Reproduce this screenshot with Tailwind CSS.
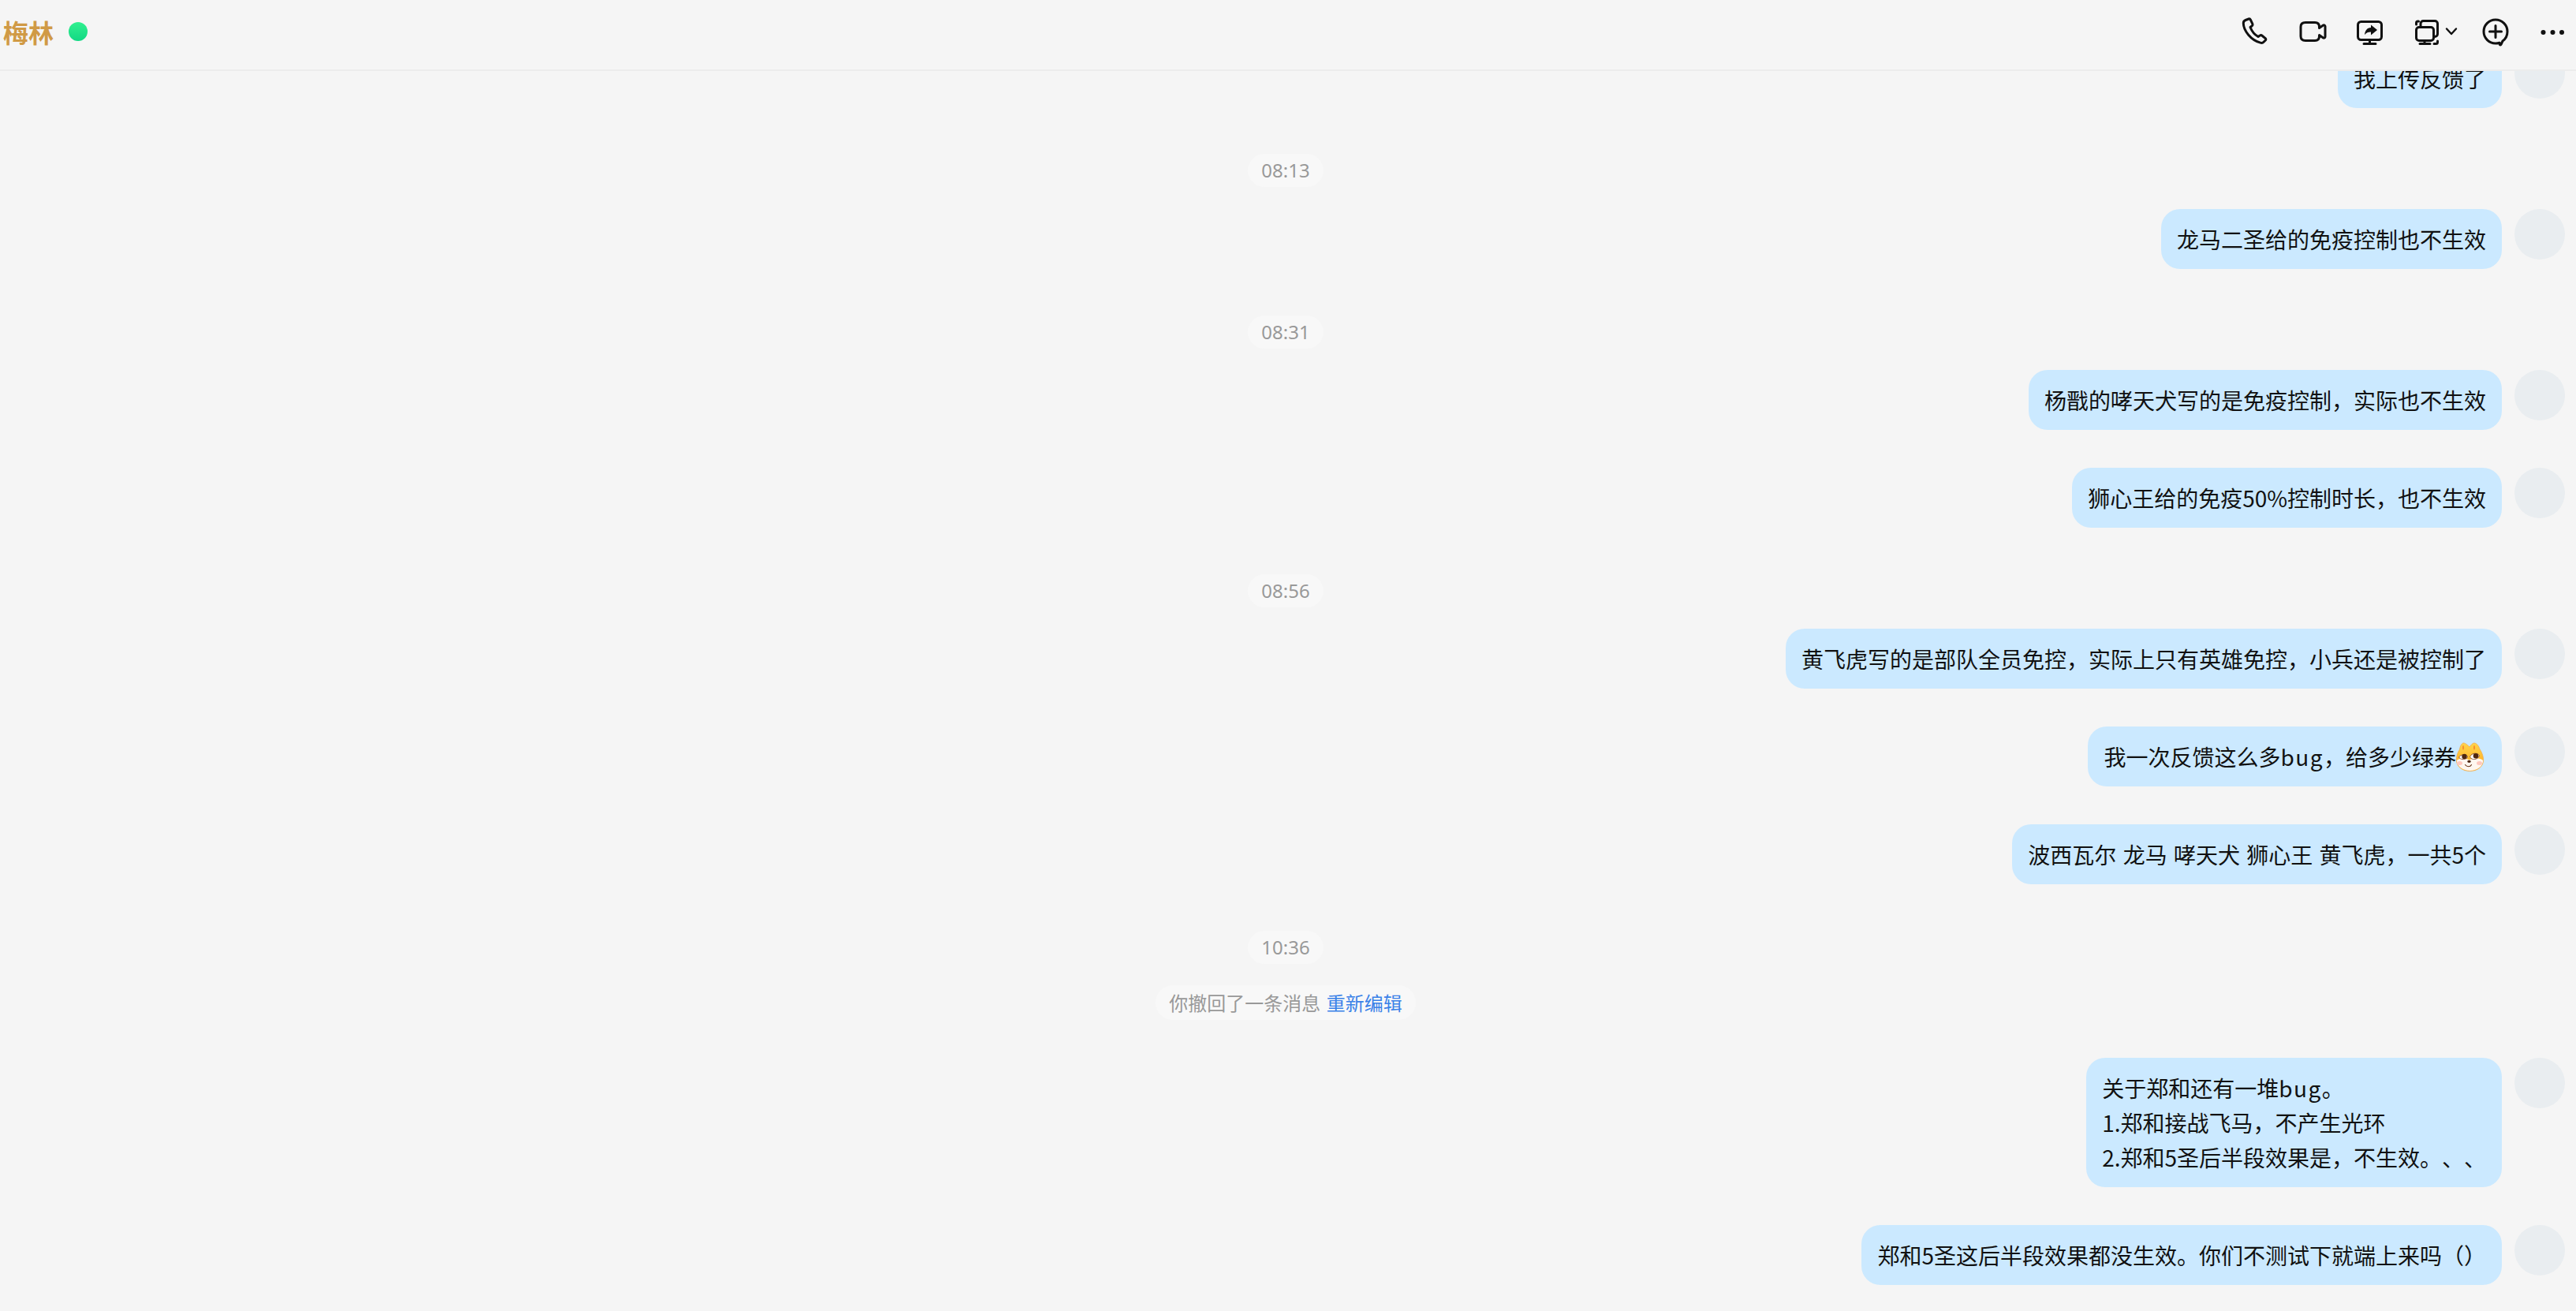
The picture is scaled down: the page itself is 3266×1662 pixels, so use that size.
<!doctype html>
<html lang="zh-CN">
<head>
<meta charset="utf-8">
<script src="https://cdn.jsdelivr.net/npm/@tailwindcss/browser@4"></script>
</head>
<body class="m-0">
<div class="w-[3266px] h-[1662px] overflow-hidden flex flex-col bg-[#f5f5f5] text-[#111] [text-spacing-trim:space-all] font-['Noto_Sans_CJK_SC','Noto_Sans',sans-serif]">
  <header class="h-[90px] shrink-0 relative z-10 bg-[#f5f5f5] border-b-2 border-[#ececec] flex items-center justify-between pl-[4px] pr-[10px] pb-[8px]">
    <div class="flex items-center gap-[19px]">
      <span class="text-[32px] font-bold leading-[44px] text-[#d09a45]">梅林</span>
      <span class="w-[24px] h-[24px] rounded-full bg-gradient-to-b from-[#2ff08f] to-[#10d884]"></span>
    </div>
    <div class="flex items-center gap-[32px] text-[#111]">
      <svg class="w-[40px] h-[40px]" viewBox="0 0 40 40" fill="none" stroke="currentColor" stroke-width="3" stroke-linejoin="round" stroke-linecap="round"><path d="M7 5.500l4-1.500c1-.3 1.800 0 2.300 1l2.600 5.400c.4.900.2 1.700-.6 2.300l-2.300 1.800c1.800 4.500 5.600 9.500 10 12l2.400-1.600c.8-.5 1.600-.5 2.300.1l4.500 3.700c.8.700.8 1.500.1 2.300l-2.300 2.300c-1.200 1.200-2.700 1.300-4.200.8C14 31 4.500 19 4.300 9.500 4.300 7.500 5.300 6.200 7 5.500z"/></svg>
      <svg class="w-[40px] h-[40px]" viewBox="0 0 40 40" fill="none" stroke="currentColor" stroke-width="3" stroke-linejoin="round" stroke-linecap="round"><path d="M11 8.500h12c3.500 0 5.500 2 5.500 5.500v1.500l5-3.500c1-.6 2.500 0 2.500 1.500v13c0 1.500-1.500 2.100-2.500 1.500l-5-3.500V26c0 3.500-2 5.500-5.500 5.500H11c-4 0-6-2-6-5.500V14c0-3.500 2-5.500 6-5.500z"/></svg>
      <svg class="w-[40px] h-[40px]" viewBox="0 0 40 40" fill="none" stroke="currentColor" stroke-width="3" stroke-linejoin="round" stroke-linecap="round"><rect x="5.500" y="7.500" width="30" height="23" rx="4"/><path d="M20.500 31v4.500M13 35.500h15"/><path fill="currentColor" stroke="none" d="M22 11.500l8 6.500-8 6.500v-4c-3.500 0-6 1-8 3.500.5-5 3-9 8-9z"/></svg>
      <div class="flex items-center gap-[4px]">
        <svg class="w-[40px] h-[40px]" viewBox="0 0 40 40" fill="none" stroke="currentColor" stroke-width="3" stroke-linejoin="round" stroke-linecap="round"><rect x="7.500" y="14.500" width="22" height="17" rx="3.500"/><path d="M13 14.500V10c0-2 1.500-3.500 3.500-3.500H31c2 0 3.500 1.500 3.500 3.500v13c0 2-1.500 3.500-3.500 3.500h-1.500"/><path d="M7.500 11V9c0-1.300.8-2 2-2h1M34.500 32v1.500c0 1.300-.8 2-2 2H30"/><path d="M18 31.500v3.500M12 35.500h13"/></svg>
        <svg class="w-[16px] h-[12px]" viewBox="0 0 16 12" fill="none" stroke="currentColor" stroke-width="2.400" stroke-linejoin="round" stroke-linecap="round"><path d="M2 2.500l6 6.500 6-6.500"/></svg>
      </div>
      <svg class="w-[40px] h-[40px] -ml-[4px]" viewBox="0 0 40 40" fill="none" stroke="currentColor" stroke-width="3" stroke-linejoin="round" stroke-linecap="round"><path d="M25 34.200C23.400 34.700 21.800 35 20 35 11.700 35 5 28.300 5 20S11.700 5 20 5s15 6.700 15 15c0 5-2.500 9.500-6 12l-2 4.300c-.4.800-1.200.8-1.700.2z"/><path d="M20 12.500v15M12.500 20h15"/></svg>
      <svg class="w-[40px] h-[40px]" viewBox="0 0 40 40" fill="currentColor"><circle cx="8.500" cy="21" r="3"/><circle cx="20.500" cy="21" r="3"/><circle cx="32" cy="21" r="3"/></svg>
    </div>
  </header>

  <main class="flex-1 overflow-hidden pr-[14px] pb-[20px]">
    <div class="flex flex-col -mt-[29px]">
      <div class="flex justify-end items-start gap-[16px]">
        <div class="bg-[#cbe9ff] rounded-[24px] px-[20px] py-[16px] text-[28px] leading-[44px]">我上传反馈了</div>
        <div class="w-[64px] h-[64px] rounded-full bg-[#e9edf0]"></div>
      </div>

      <div class="mt-[58px] flex justify-center pl-[8px]">
        <span class="h-[42px] px-[17px] rounded-full bg-[#f8f8f8] font-['Noto_Sans'] text-[24px] leading-[42px] text-[#999]">08:13</span>
      </div>

      <div class="mt-[28px] flex justify-end items-start gap-[16px]">
        <div class="bg-[#cbe9ff] rounded-[24px] px-[20px] py-[16px] text-[28px] leading-[44px]">龙马二圣给的免疫控制也不生效</div>
        <div class="w-[64px] h-[64px] rounded-full bg-[#e9edf0]"></div>
      </div>

      <div class="mt-[59px] flex justify-center pl-[8px]">
        <span class="h-[42px] px-[17px] rounded-full bg-[#f8f8f8] font-['Noto_Sans'] text-[24px] leading-[42px] text-[#999]">08:31</span>
      </div>

      <div class="mt-[27px] flex justify-end items-start gap-[16px]">
        <div class="bg-[#cbe9ff] rounded-[24px] px-[20px] py-[16px] text-[28px] leading-[44px]">杨戬的哮天犬写的是免疫控制，实际也不生效</div>
        <div class="w-[64px] h-[64px] rounded-full bg-[#e9edf0]"></div>
      </div>

      <div class="mt-[48px] flex justify-end items-start gap-[16px]">
        <div class="bg-[#cbe9ff] rounded-[24px] px-[20px] py-[16px] text-[28px] leading-[44px]">狮心王给的免疫50%控制时长，也不生效</div>
        <div class="w-[64px] h-[64px] rounded-full bg-[#e9edf0]"></div>
      </div>

      <div class="mt-[59px] flex justify-center pl-[8px]">
        <span class="h-[42px] px-[17px] rounded-full bg-[#f8f8f8] font-['Noto_Sans'] text-[24px] leading-[42px] text-[#999]">08:56</span>
      </div>

      <div class="mt-[27px] flex justify-end items-start gap-[16px]">
        <div class="bg-[#cbe9ff] rounded-[24px] px-[20px] py-[16px] text-[28px] leading-[44px]">黄飞虎写的是部队全员免控，实际上只有英雄免控，小兵还是被控制了</div>
        <div class="w-[64px] h-[64px] rounded-full bg-[#e9edf0]"></div>
      </div>

      <div class="mt-[48px] flex justify-end items-start gap-[16px]">
        <div class="bg-[#cbe9ff] rounded-[24px] pl-[20px] pr-[23px] py-[16px] text-[28px] leading-[44px] flex items-center"><span>我一次反馈这么多<span class="tracking-[1.500px]">bug</span>，给多少绿券</span>
          <svg class="w-[35px] h-[37px] shrink-0" viewBox="0 0 35 37">
            <defs><linearGradient id="dogHead" x1="0" y1="0" x2="0" y2="1"><stop offset="0" stop-color="#ffd54a"/><stop offset="0.6" stop-color="#ffb92e"/></linearGradient></defs>
            <path d="M17 6C14 3 11 .5 9 1 7 1.500 5 5 4.500 9 1.500 13 0 19 .5 24 1.500 32 9 36.500 17.500 36.500 26 36.500 33.500 32 34.500 24 35 19 33 13 30 9 29 5 26 1 23 1 21 1 19 3 17 6Z" fill="url(#dogHead)" stroke="#f2a94e" stroke-width=".8"/>
            <path d="M.8 23C4 20 11 19.500 16.500 22.500 22 19.500 30 19.500 34.200 23 34 31 26 36 17.500 36 9 36 1.500 31 .8 23Z" fill="#fff7f0"/>
            <ellipse cx="4.500" cy="26.500" rx="3.500" ry="2.500" fill="#ffc7bd"/>
            <ellipse cx="29.500" cy="26.500" rx="3.500" ry="2.500" fill="#ffc7bd"/>
            <path d="M9 3.500C10.500 5.500 10.500 8 9 10 7.500 8 7.500 5.500 9 3.500ZM23 3.500C24.500 5.500 24.500 8 23 10 21.500 8 21.500 5.500 23 3.500Z" fill="#f7902e"/>
            <path d="M3.500 19C5.500 15.500 12 14.500 14.500 18 14.500 20.500 11 22 8 21.500 6 21.300 4.500 20.500 3.500 19Z" fill="#fff" stroke="#7a3b1a" stroke-width=".8"/>
            <path d="M17.500 18.500C19.500 13.500 27 12.500 29.500 17 28 20.500 24.500 22 21.500 21.500 19.500 21 18.300 20 17.500 18.500Z" fill="#fff" stroke="#7a3b1a" stroke-width=".8"/>
            <circle cx="10.500" cy="18" r="3.200" fill="#4f2710"/>
            <circle cx="25" cy="17.300" r="3.300" fill="#4f2710"/>
            <ellipse cx="16.500" cy="24.300" rx="2.300" ry="1.600" fill="#4f2710"/>
            <path d="M11.500 28.500C13.500 31.500 18 31.500 19.500 28.500" fill="none" stroke="#6b3418" stroke-width="1.100" stroke-linecap="round"/>
          </svg>
        </div>
        <div class="w-[64px] h-[64px] rounded-full bg-[#e9edf0]"></div>
      </div>

      <div class="mt-[48px] flex justify-end items-start gap-[16px]">
        <div class="bg-[#cbe9ff] rounded-[24px] px-[20px] py-[16px] text-[28px] leading-[44px] [word-spacing:2px]">波西瓦尔 龙马 哮天犬 狮心王 黄飞虎，一共5个</div>
        <div class="w-[64px] h-[64px] rounded-full bg-[#e9edf0]"></div>
      </div>

      <div class="mt-[59px] flex justify-center pl-[8px]">
        <span class="h-[42px] px-[17px] rounded-full bg-[#f8f8f8] font-['Noto_Sans'] text-[24px] leading-[42px] text-[#999]">10:36</span>
      </div>

      <div class="mt-[27px] flex justify-center pl-[8px]">
        <span class="h-[44px] px-[17px] rounded-full bg-[#f8f8f8] text-[24px] leading-[44px] text-[#999] [word-spacing:2px]">你撤回了一条消息 <span class="text-[#3b82e8]">重新编辑</span></span>
      </div>

      <div class="mt-[48px] flex justify-end items-start gap-[16px]">
        <div class="bg-[#cbe9ff] rounded-[24px] px-[20px] py-[16px] text-[28px] leading-[44px]">关于郑和还有一堆<span class="tracking-[1.500px]">bug</span>。<br>1.郑和接战飞马，不产生光环<br>2.郑和5圣后半段效果是，不生效。、、</div>
        <div class="w-[64px] h-[64px] rounded-full bg-[#e9edf0]"></div>
      </div>

      <div class="mt-[48px] flex justify-end items-start gap-[16px]">
        <div class="bg-[#cbe9ff] rounded-[24px] px-[20px] py-[16px] text-[28px] leading-[44px]">郑和5圣这后半段效果都没生效。你们不测试下就端上来吗（）</div>
        <div class="w-[64px] h-[64px] rounded-full bg-[#e9edf0]"></div>
      </div>
    </div>
  </main>
</div>
</body>
</html>
